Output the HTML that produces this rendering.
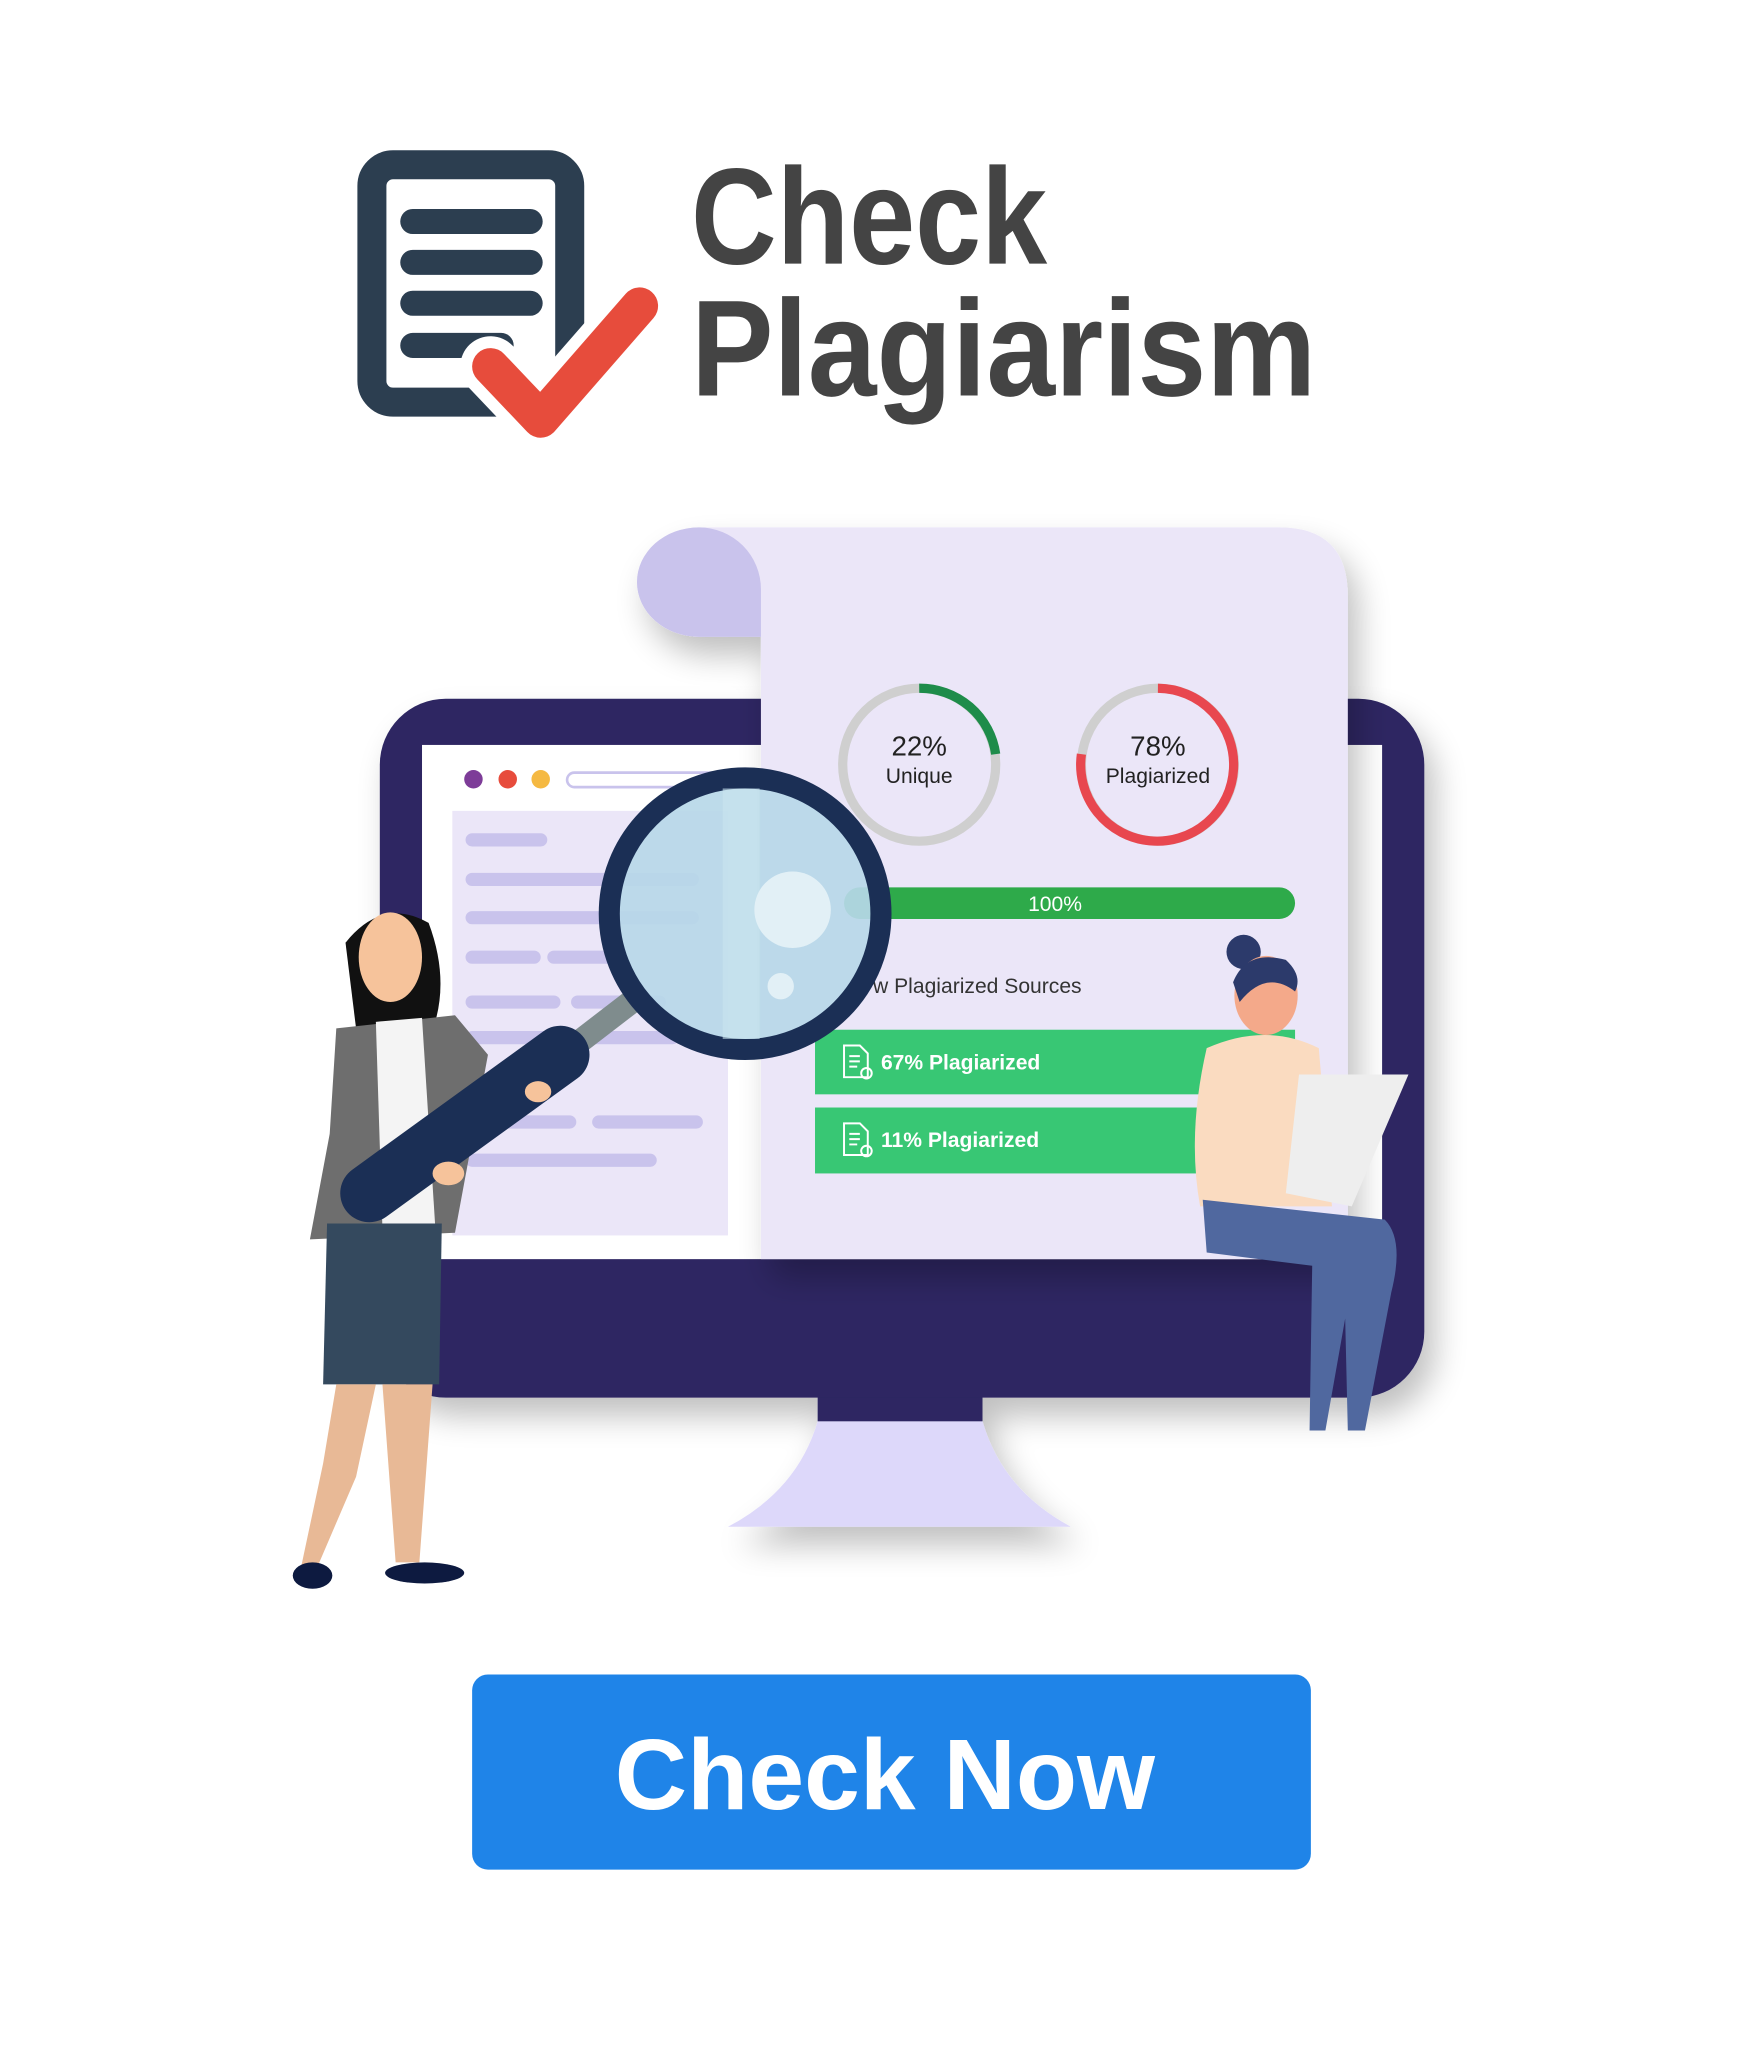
<!DOCTYPE html>
<html><head><meta charset="utf-8"><style>
html,body{margin:0;padding:0;background:#fff;width:1754px;height:2070px;overflow:hidden}
svg{display:block}
</style></head><body>
<svg width="1754" height="2070" viewBox="0 0 1330 1570" preserveAspectRatio="none" xmlns="http://www.w3.org/2000/svg">
<defs>
<filter id="sh" x="-20%" y="-20%" width="140%" height="140%"><feGaussianBlur in="SourceAlpha" stdDeviation="12"/><feOffset dx="8" dy="14"/><feComponentTransfer><feFuncA type="linear" slope="0.25"/></feComponentTransfer><feMerge><feMergeNode/><feMergeNode in="SourceGraphic"/></feMerge></filter>
</defs>
<!-- Logo -->
<rect x="282" y="125" width="150" height="180" rx="16" fill="none" stroke="#2c3e50" stroke-width="22"/>
<g stroke="#2c3e50" stroke-width="19" stroke-linecap="round">
<line x1="313" y1="168" x2="402" y2="168"/><line x1="313" y1="199" x2="402" y2="199"/><line x1="313" y1="230" x2="402" y2="230"/><line x1="313" y1="262" x2="380" y2="262"/>
</g>
<path d="M372 278 L410 318 L485 232" fill="none" stroke="#fff" stroke-width="46" stroke-linecap="round" stroke-linejoin="round"/>
<path d="M372 278 L410 318 L485 232" fill="none" stroke="#e74c3c" stroke-width="28" stroke-linecap="round" stroke-linejoin="round"/>
<text x="524" y="200" font-family="Liberation Sans Narrow, Liberation Sans, sans-serif" font-weight="bold" font-size="104" fill="#444" textLength="270" lengthAdjust="spacingAndGlyphs">Check</text>
<text x="524" y="300" font-family="Liberation Sans Narrow, Liberation Sans, sans-serif" font-weight="bold" font-size="104" fill="#444" textLength="474" lengthAdjust="spacingAndGlyphs">Plagiarism</text>

<!-- Monitor -->
<g filter="url(#sh)">
<path d="M620 1060 H745 V1078 Q760 1130 812 1158 H552 Q605 1130 620 1078 Z" fill="#ddd8fa"/>
<rect x="620" y="1058" width="125" height="20" fill="#2d2862"/>
<rect x="288" y="530" width="792" height="530" rx="50" fill="#2d2862"/>
</g>
<rect x="320" y="565" width="728" height="390" fill="#fff"/>
<rect x="343" y="615" width="209" height="322" fill="#ebe6f8"/>
<circle cx="359" cy="591" r="7" fill="#7d3c98"/><circle cx="385" cy="591" r="7" fill="#e74c3c"/><circle cx="410" cy="591" r="7" fill="#f5b942"/>
<rect x="430" y="586" width="140" height="11" rx="5.5" fill="none" stroke="#c9c3ec" stroke-width="2"/>
<g stroke="#c9c3ec" stroke-width="10" stroke-linecap="round">
<line x1="358" y1="637" x2="410" y2="637"/><line x1="358" y1="667" x2="525" y2="667"/><line x1="358" y1="696" x2="525" y2="696"/>
<line x1="358" y1="726" x2="405" y2="726"/><line x1="420" y1="726" x2="470" y2="726"/><line x1="358" y1="760" x2="420" y2="760"/><line x1="438" y1="760" x2="500" y2="760"/>
<line x1="358" y1="787" x2="510" y2="787"/><line x1="358" y1="851" x2="432" y2="851"/><line x1="454" y1="851" x2="528" y2="851"/><line x1="358" y1="880" x2="493" y2="880"/>
</g>
<!-- scroll -->
<g filter="url(#sh)">
<path d="M530 400 H970 Q1022 400 1022 452 V955 H577 V483 H530 A47 41.5 0 0 1 530 400 Z" fill="#ebe6f8"/>
</g>
<path d="M530 400 A47 41.5 0 0 0 530 483 H577 V447 A47 47 0 0 0 530 400 Z" fill="#c9c3ec"/>
<!-- rings -->
<circle cx="697" cy="580" r="58" fill="none" stroke="#cfcfcf" stroke-width="7"/>
<path d="M697 522 A58 58 0 0 1 755 572" fill="none" stroke="#1e8c4a" stroke-width="7"/>
<text x="697" y="573" text-anchor="middle" font-family="Liberation Sans, sans-serif" font-size="21" fill="#222">22%</text>
<text x="697" y="594" text-anchor="middle" font-family="Liberation Sans, sans-serif" font-size="16" fill="#222">Unique</text>
<circle cx="878" cy="580" r="58" fill="none" stroke="#cfcfcf" stroke-width="7"/>
<path d="M878 522 A58 58 0 1 1 820 572" fill="none" stroke="#e8474f" stroke-width="7"/>
<text x="878" y="573" text-anchor="middle" font-family="Liberation Sans, sans-serif" font-size="21" fill="#222">78%</text>
<text x="878" y="594" text-anchor="middle" font-family="Liberation Sans, sans-serif" font-size="16" fill="#222">Plagiarized</text>
<rect x="640" y="673" width="342" height="24" rx="12" fill="#2eaa4a"/>
<text x="800" y="691" text-anchor="middle" font-family="Liberation Sans, sans-serif" font-size="16" fill="#fff">100%</text>
<text x="662" y="753" font-family="Liberation Sans, sans-serif" font-size="16" fill="#333">w Plagiarized Sources</text>
<rect x="618" y="781" width="364" height="49" fill="#38c774"/>
<rect x="618" y="840" width="364" height="50" fill="#38c774"/>
<g fill="none" stroke="#fff" stroke-width="1.5">
<path d="M640 793 h12 l6 6 v18 h-18 z M644 801 h8 M644 805 h8 M644 809 h6"/><circle cx="657" cy="814" r="4"/>
<path d="M640 852 h12 l6 6 v18 h-18 z M644 860 h8 M644 864 h8 M644 868 h6"/><circle cx="657" cy="873" r="4"/>
</g>
<text x="668" y="811" font-family="Liberation Sans, sans-serif" font-weight="bold" font-size="16" fill="#fff">67% Plagiarized</text>
<text x="668" y="870" font-family="Liberation Sans, sans-serif" font-weight="bold" font-size="16" fill="#fff">11% Plagiarized</text>
<!-- woman left -->
<path d="M262 715 Q290 680 325 700 Q340 740 330 775 L270 780 Z" fill="#111"/>
<ellipse cx="296" cy="726" rx="24" ry="34" fill="#f6c39b"/>
<path d="M255 780 L345 770 L370 800 L345 935 L235 940 L250 860 Z" fill="#6e6e6e"/>
<path d="M285 775 L320 772 L330 930 L290 932 Z" fill="#f4f4f4"/>
<path d="M248 928 H335 L333 1050 H245 Z" fill="#34495e"/>
<path d="M255 1050 L285 1050 L270 1120 L240 1190 L228 1190 L245 1110 Z M290 1050 H328 L318 1185 H300 Z" fill="#e8b996"/>
<ellipse cx="237" cy="1195" rx="15" ry="10" fill="#0d1a40"/><ellipse cx="322" cy="1193" rx="30" ry="8" fill="#0d1a40"/>
<!-- magnifier -->
<line x1="485" y1="755" x2="420" y2="805" stroke="#7f8c8d" stroke-width="18"/>
<line x1="425" y1="800" x2="280" y2="905" stroke="#1b2f55" stroke-width="44" stroke-linecap="round"/>
<ellipse cx="408" cy="828" rx="10" ry="8" fill="#f6c39b"/><ellipse cx="340" cy="890" rx="12" ry="9" fill="#f6c39b"/>
<circle cx="565" cy="693" r="103" fill="#b7d8e8" fill-opacity="0.92" stroke="#1b2f55" stroke-width="16"/>
<rect x="548" y="598" width="28" height="190" fill="#c9e5ee" opacity="0.6"/>
<circle cx="601" cy="690" r="29" fill="#e2f0f6"/><circle cx="592" cy="748" r="10" fill="#e2f0f6"/>
<!-- woman right -->
<circle cx="943" cy="722" r="13" fill="#2c3a6b"/>
<ellipse cx="960" cy="755" rx="24" ry="30" fill="#f4a98a"/>
<path d="M935 745 Q945 720 975 728 Q988 740 982 752 Q960 735 940 760 Z" fill="#2c3a6b"/>
<path d="M915 795 Q960 775 1000 795 L1010 915 L910 915 Q900 860 915 795 Z" fill="#fadbc0"/>
<path d="M985 815 L1068 815 L1025 915 L975 905 Z" fill="#eeeeee"/>
<path d="M912 910 L1050 925 Q1065 940 1055 980 L1035 1085 L1022 1085 L1020 1000 L1005 1085 L993 1085 L995 960 L915 950 Z" fill="#50689f"/>
<!-- button -->
<rect x="358" y="1270" width="636" height="148" rx="12" fill="#1f84e8"/>
<text x="671" y="1372" text-anchor="middle" font-family="Liberation Sans, sans-serif" font-weight="bold" font-size="76" fill="#fff">Check Now</text>
</svg>
</body></html>
